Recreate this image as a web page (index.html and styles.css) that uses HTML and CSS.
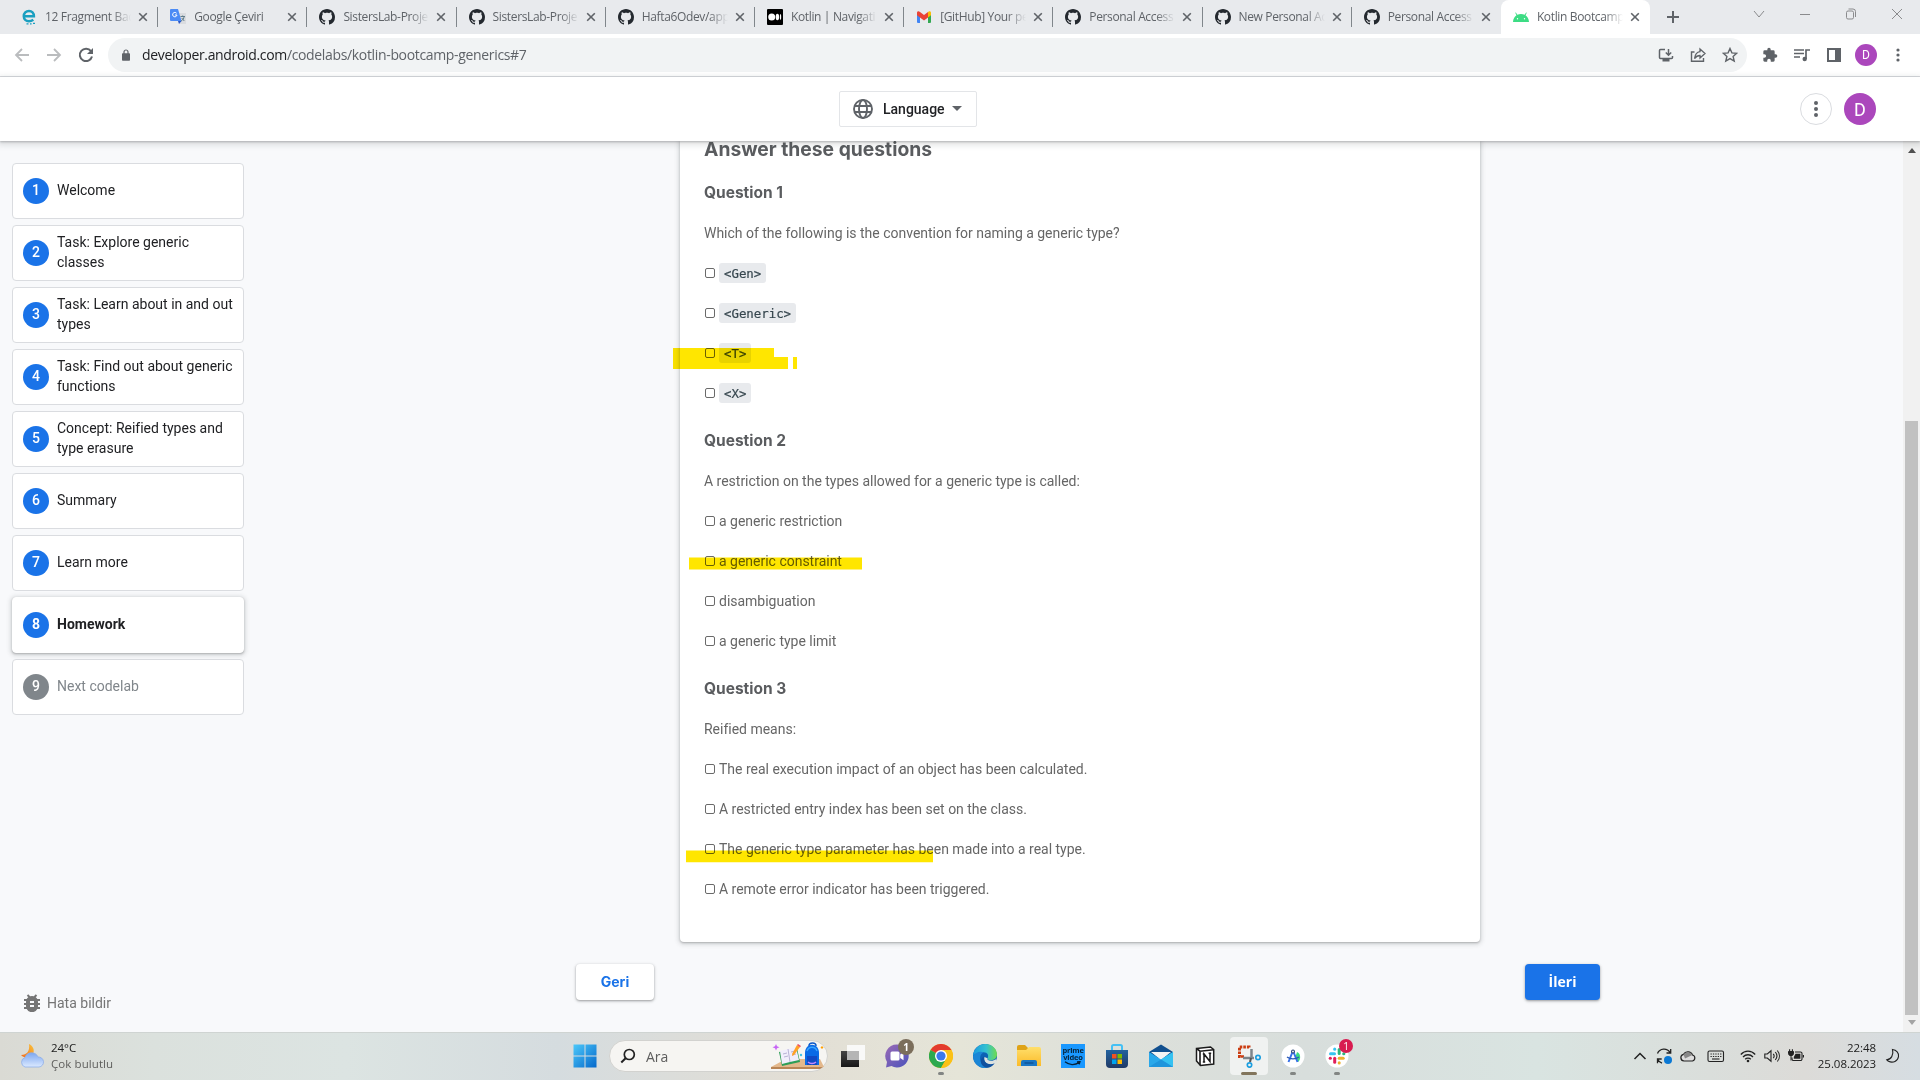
FILE: index.html
```html
<!DOCTYPE html>
<html lang="tr">
<head>
<meta charset="utf-8">
<title>Kotlin Bootcamp</title>
<link rel="stylesheet" href="styles.css">
</head>
<body>
<svg class="defs" aria-hidden="true">
  <symbol id="github" viewBox="0 0 16 16"><path fill="#24292f" d="M8 0C3.58 0 0 3.58 0 8c0 3.54 2.29 6.53 5.47 7.59.4.07.55-.17.55-.38 0-.19-.01-.82-.01-1.49-2.01.37-2.53-.49-2.69-.94-.09-.23-.48-.94-.82-1.13-.28-.15-.68-.52-.01-.53.63-.01 1.08.58 1.23.82.72 1.21 1.87.87 2.33.66.07-.52.28-.87.51-1.07-1.78-.2-3.64-.89-3.64-3.95 0-.87.31-1.59.82-2.15-.08-.2-.36-1.02.08-2.12 0 0 .67-.21 2.2.82.64-.18 1.32-.27 2-.27.68 0 1.36.09 2 .27 1.53-1.04 2.2-.82 2.2-.82.44 1.1.16 1.92.08 2.12.51.56.82 1.27.82 2.15 0 3.07-1.87 3.75-3.65 3.95.29.25.54.73.54 1.48 0 1.07-.01 1.93-.01 2.2 0 .21.15.46.55.38A8.013 8.013 0 0016 8c0-4.42-3.58-8-8-8z"/></symbol>
  <symbol id="close" viewBox="0 0 16 16"><path d="M4.2 4.2l7.6 7.6M11.8 4.2l-7.6 7.6" stroke="#5f6368" stroke-width="1.6" fill="none"/></symbol>
</svg>

<header class="tabs">
  <div class="tab"><svg class="fav" viewBox="0 0 16 16"><path d="M4 7.300H12.900C12.900 4 10.800 2 8 2 5 2 2.800 4.200 2.800 7.300c0 3.100 2.200 4.900 5 4.900 1.700 0 3.200-.5 4.500-1.500" fill="none" stroke="#1a9fc0" stroke-width="2.500"/><path d="M5.500 14.800h2M9 14.800h1.600M12 14.300h2" stroke="#1a9fc0" stroke-width="1.300"/></svg><span class="tab-title">12 Fragment Bac</span><svg class="x"><use href="#close"/></svg></div>
  <div class="tab"><svg class="fav" viewBox="0 0 16 16"><path d="M7 4h9v11H9z" fill="#dadce0"/><path d="M1 0h7l3.500 12H1a1 1 0 0 1-1-1V1a1 1 0 0 1 1-1z" fill="#4c8bf5"/><path d="M8 12h3.500L9 15z" fill="#2a56c6"/><path d="M6.600 4.300A2.200 2.200 0 1 0 7 6H5" stroke="#fff" fill="none"/><path d="M10.500 7.500h4.500M12.700 6.500v1M11 12c2-1 3-2.500 3-4.300M11.700 9l2.600 3" stroke="#607d8b" fill="none"/></svg><span class="tab-title">Google Çeviri</span><svg class="x"><use href="#close"/></svg></div>
  <div class="tab"><svg class="fav"><use href="#github"/></svg><span class="tab-title">SistersLab-Proje</span><svg class="x"><use href="#close"/></svg></div>
  <div class="tab"><svg class="fav"><use href="#github"/></svg><span class="tab-title">SistersLab-Proje</span><svg class="x"><use href="#close"/></svg></div>
  <div class="tab"><svg class="fav"><use href="#github"/></svg><span class="tab-title">Hafta6Odev/app</span><svg class="x"><use href="#close"/></svg></div>
  <div class="tab"><svg class="fav" viewBox="0 0 16 16"><rect width="16" height="16" rx="1"/><g fill="#fff"><circle cx="4.700" cy="8" r="3.500"/><ellipse cx="10.400" cy="8" rx="1.700" ry="3.300"/><ellipse cx="13.500" cy="8" rx=".7" ry="3"/></g></svg><span class="tab-title">Kotlin | Navigati</span><svg class="x"><use href="#close"/></svg></div>
  <div class="tab"><svg class="fav" viewBox="0 0 16 16"><path d="M1 3.500v9.500a1 1 0 0 0 1 1h2V6z" fill="#4285f4"/><path d="M15 3.500v9.500a1 1 0 0 1-1 1h-2V6z" fill="#34a853"/><path d="M12 4v4.500l3-2.300V4c0-1.800-1.600-2.300-3-1z" fill="#fbbc04"/><path d="M1 4v2.200l7 5.300 4-3V3L8 6 4 3C2.600 1.700 1 2.200 1 4z" fill="#ea4335"/></svg><span class="tab-title">[GitHub] Your pe</span><svg class="x"><use href="#close"/></svg></div>
  <div class="tab"><svg class="fav"><use href="#github"/></svg><span class="tab-title">Personal Access</span><svg class="x"><use href="#close"/></svg></div>
  <div class="tab"><svg class="fav"><use href="#github"/></svg><span class="tab-title">New Personal Ac</span><svg class="x"><use href="#close"/></svg></div>
  <div class="tab last"><svg class="fav"><use href="#github"/></svg><span class="tab-title">Personal Access</span><svg class="x"><use href="#close"/></svg></div>
  <div class="tab active"><svg class="fav" viewBox="0 0 16 16"><path d="M0 13c.2-3.300 1.500-5.500 3.500-6.800L2.200 3.800l.7-.4 1.400 2.400c2.300-1 5-1 7.400 0L13.100 3.400l.7.4-1.300 2.400c2 1.300 3.300 3.500 3.500 6.800z" fill="#3ddc84"/><circle cx="4.500" cy="9.800" r=".7" fill="#fff"/><circle cx="11.500" cy="9.800" r=".7" fill="#fff"/></svg><span class="tab-title">Kotlin Bootcamp</span><svg class="x"><use href="#close"/></svg></div>
  <svg class="new-tab" viewBox="0 0 16 16"><path d="M8 2v12M2 8h12" stroke="#5f6368" stroke-width="2"/></svg>
  <div class="window-buttons">
    <svg viewBox="0 0 16 16"><path d="M3 5l5 6 5-6"/></svg>
    <svg viewBox="0 0 16 16"><path d="M3 8.500h10"/></svg>
    <svg viewBox="0 0 16 16"><rect x="3.500" y="5" width="7" height="8" rx="1.500"/><path d="M5.500 3h4.500a2.500 2.500 0 0 1 2.500 2.500V11"/></svg>
    <svg viewBox="0 0 16 16"><path d="M3 3l10 10M13 3L3 13"/></svg>
  </div>
</header>

<div class="toolbar">
  <div class="nav-icons">
    <svg viewBox="0 0 16 16"><path d="M15 8H2M8 2L2 8l6 6" stroke="#babcbe" stroke-width="1.800" fill="none"/></svg>
    <svg viewBox="0 0 16 16"><path d="M1 8h13M8 2l6 6-6 6" stroke="#babcbe" stroke-width="1.800" fill="none"/></svg>
    <svg viewBox="0 0 16 16"><path d="M13 4.200A6.200 6.200 0 1 0 14 9.500" stroke="#5f6368" stroke-width="2" fill="none"/><path d="M15 1v6H9z" fill="#5f6368"/></svg>
  </div>
  <div class="omnibox">
    <svg class="lock" viewBox="0 0 8 12"><rect y="4.300" width="8" height="7.500" rx=".8" fill="#5f6368"/><path d="M2 5V3a2 2 0 0 1 4 0v2" fill="none" stroke="#5f6368" stroke-width="1.200"/></svg>
    <span class="url"><b>developer.android.com</b>/codelabs/kotlin-bootcamp-generics#7</span>
    <svg viewBox="0 0 16 16"><path d="M7 2.500H2.500a1 1 0 0 0-1 1v7a1 1 0 0 0 1 1h11a1 1 0 0 0 1-1V9M10.500 2v6M7.800 5.500l2.700 2.700 2.700-2.700" fill="none" stroke="#5f6368" stroke-width="1.500"/><path d="M4.500 12h7v2.500h-7z" fill="#5f6368"/></svg>
    <svg viewBox="0 0 16 16"><path d="M4.500 5H1.500v9.300h12V11" fill="none" stroke="#5f6368" stroke-width="1.400"/><path d="M10 2l5 4.500-5 4.500V8.500C7.500 8.500 6 9.500 4.500 11.500 5 8 7 5 10 4.600z" fill="none" stroke="#5f6368" stroke-width="1.300"/></svg>
    <svg viewBox="0 0 16 16"><path d="M8 1.500l1.900 4.400 4.800.4-3.600 3.100 1.100 4.700L8 11.600l-4.200 2.500 1.100-4.700L1.300 6.300l4.800-.4z" fill="none" stroke="#5f6368" stroke-width="1.400"/></svg>
  </div>
  <div class="tool-icons">
    <svg viewBox="0 0 24 24"><path fill="#5f6368" d="M20.500 11H19V7a2 2 0 0 0-2-2h-4V3.500a2.500 2.500 0 0 0-5 0V5H4a2 2 0 0 0-2 2v3.800h1.500a2.700 2.700 0 0 1 0 5.400H2V20c0 1.100.9 2 2 2h3.800v-1.500a2.700 2.700 0 0 1 5.400 0V22H17a2 2 0 0 0 2-2v-4h1.500a2.500 2.500 0 0 0 0-5z"/></svg>
    <svg viewBox="0 0 16 16"><path d="M0 3h10M0 6.500h10M0 10h6M12 12V3h4" fill="none" stroke="#5f6368" stroke-width="1.700"/><circle cx="10.700" cy="12" r="2.200" fill="#5f6368"/></svg>
    <svg viewBox="0 0 16 16"><path fill="#5f6368" fill-rule="evenodd" d="M1 1h14v14H1zM3 3v10h6V3z"/></svg>
    <span class="avatar small">D</span>
    <svg class="menu" viewBox="0 0 16 16"><g fill="#5f6368"><circle cx="8" cy="3" r="1.600"/><circle cx="8" cy="8" r="1.600"/><circle cx="8" cy="13" r="1.600"/></g></svg>
  </div>
</div>

<div class="site-header">
  <button class="language"><svg class="globe" viewBox="0 0 20 20"><g fill="none" stroke="#5f6368" stroke-width="1.900"><circle cx="10" cy="10" r="9"/><ellipse cx="10" cy="10" rx="4" ry="9"/><path d="M1.500 7h17M1.500 13h17"/></g></svg><span>Language</span><svg class="caret" viewBox="0 0 10 5"><path d="M0 0h10L5 5z" fill="#5f6368"/></svg></button>
  <div class="account">
    <span class="more"><svg viewBox="0 0 16 16"><g fill="#5f6368"><circle cx="8" cy="2" r="2"/><circle cx="8" cy="8" r="2"/><circle cx="8" cy="14" r="2"/></g></svg></span>
    <span class="avatar">D</span>
  </div>
</div>

<main class="page">
  <nav class="sidebar">
    <ol class="steps">
      <li><i>1</i><span>Welcome</span></li>
      <li><i>2</i><span>Task: Explore generic classes</span></li>
      <li><i>3</i><span>Task: Learn about in and out types</span></li>
      <li><i>4</i><span>Task: Find out about generic functions</span></li>
      <li><i>5</i><span>Concept: Reified types and type erasure</span></li>
      <li><i>6</i><span>Summary</span></li>
      <li><i>7</i><span>Learn more</span></li>
      <li class="current"><i>8</i><span>Homework</span></li>
      <li class="next"><i>9</i><span>Next codelab</span></li>
    </ol>
    <div class="report"><svg viewBox="0 0 18 18"><path fill="#757575" d="M17 5h-2.700a6 6 0 0 0-1.600-1.800L14.200 1.700 12.800.3l-2 2a6 6 0 0 0-3.600 0l-2-2-1.400 1.400 1.500 1.500A6 6 0 0 0 3.700 5H1v2h2.100L3 8v1H1v2h2v1l.1 1H1v2h2.700a6 6 0 0 0 10.600 0H17v-2h-2.100l.1-1v-1h2V9h-2V8l-.1-1H17zM11 13H7v-2h4zm0-4H7V7h4z"/></svg><span>Hata bildir</span></div>
  </nav>

  <div class="column">
    <article class="card">
      <h2>Answer these questions</h2>
      <h3>Question 1</h3>
      <p>Which of the following is the convention for naming a generic type?</p>
      <p class="option"><span class="box"></span><code>&lt;Gen&gt;</code></p>
      <p class="option"><span class="box"></span><code>&lt;Generic&gt;</code></p>
      <p class="option"><span class="box"></span><code>&lt;T&gt;</code></p>
      <p class="option"><span class="box"></span><code>&lt;X&gt;</code></p>
      <h3>Question 2</h3>
      <p>A restriction on the types allowed for a generic type is called:</p>
      <p class="option"><span class="box"></span>a generic restriction</p>
      <p class="option"><span class="box"></span>a generic constraint</p>
      <p class="option"><span class="box"></span>disambiguation</p>
      <p class="option"><span class="box"></span>a generic type limit</p>
      <h3>Question 3</h3>
      <p>Reified means:</p>
      <p class="option"><span class="box"></span>The real execution impact of an object has been calculated.</p>
      <p class="option"><span class="box"></span>A restricted entry index has been set on the class.</p>
      <p class="option"><span class="box"></span>The generic type parameter has been made into a real type.</p>
      <p class="option"><span class="box"></span>A remote error indicator has been triggered.</p>
    </article>
    <div class="pager"><button class="back">Geri</button><button class="forward">İleri</button></div>
  </div>

  <div class="scrollbar">
    <svg viewBox="0 0 10 6"><path d="M1 6l4-5 4 5z" fill="#505050"/></svg>
    <div class="thumb"></div>
    <svg viewBox="0 0 10 6"><path d="M1 0l4 5 4-5z" fill="#a3a3a3"/></svg>
  </div>

  <svg class="marker" viewBox="0 141 1903 891"><g fill="#ffe600"><path d="M673 348h101v9h14v12H673z"/><path d="M793 357h4v12h-4z"/><path d="M689 557.500h173v12H689z"/><path d="M686 850.500h247v11.700H686z"/></g></svg>
</main>

<footer class="taskbar">
  <div class="weather">
    <svg viewBox="0 0 24 24"><defs><linearGradient id="cl" x1="0" y1="0" x2="0" y2="1"><stop offset="0" stop-color="#7da7f0"/><stop offset="1" stop-color="#dbe9ff"/></linearGradient><linearGradient id="mo" x1="0" y1="1" x2="1" y2="0"><stop offset="0" stop-color="#f26b1d"/><stop offset="1" stop-color="#f9c33b"/></linearGradient></defs><path d="M9 0c4 2 6 6 4 10-2 4-8 5-12 1 6 0 9-4 8-11z" fill="url(#mo)"/><path d="M5 23a5 5 0 0 1 0-9.500 7 7 0 0 1 13-.5 5 5 0 0 1 1 10z" fill="url(#cl)" stroke="#8eaee8" stroke-width=".8"/></svg>
    <div><span>24°C</span><span class="dim">Çok bulutlu</span></div>
  </div>

  <div class="apps">
    <svg class="app win" viewBox="0 0 24 24"><defs><linearGradient id="wn" x1="0" y1="0" x2="1" y2="1"><stop offset="0" stop-color="#4cc8fa"/><stop offset="1" stop-color="#0568cb"/></linearGradient></defs><path d="M.5.500h11v11H.5zM12.500.500h11v11h-11zM.5 12.500h11v11H.5zM12.500 12.500h11v11h-11z" fill="url(#wn)"/></svg>
    <div class="search">
      <svg class="lens" viewBox="0 0 16 16"><circle cx="9.300" cy="6.500" r="5" fill="none" stroke="#222" stroke-width="1.700"/><path d="M5.600 10.200L1.300 14.500" stroke="#222" stroke-width="2"/></svg>
      <span>Ara</span>
      <svg class="school" viewBox="0 0 53 28"><path d="M0 25L15 17h34l4 8z" fill="#e3b88c"/><path d="M0 25h52l-3 2H0z" fill="#b98555"/><path d="M8 10l18-4 3 14-18 4z" fill="#2e9e57"/><path d="M9 9l8-2 8-2 3 13-9 2-8 2z" fill="#f1eefc"/><path d="M17 7l2 13M12 12l4-1M13 15l4-1M20 10l4-1M21 13l4-1" stroke="#a9a2cc" stroke-width=".8"/><path d="M26 3l3 2-6 8-2 1 .3-2.500z" fill="#ffa126"/><path d="M26 3l1-1 3 2-1 1.200z" fill="#ef4b5f"/><path d="M38 4c0-4 7-4 7 0" stroke="#0a58c8" stroke-width="1.500" fill="none"/><path d="M34 23V11c0-11 14-11 14 0v12z" fill="#0a6ae6"/><path d="M36 14h10v9H36z" fill="#1149c4"/><path d="M37 20c2 2 6 2 8 0" stroke="#c38bff" stroke-width="1.500" fill="none"/><path d="M36 9c2-5 8-5 10 0" stroke="#38a5ff" fill="none" stroke-width="1.500"/><path d="M5 2l1 2.200L8.500 5.300 6 6.300 5 8.600 4 6.300 1.500 5.300 4 4.200z" fill="#c764f5"/><path d="M51 4l1.500 1.500L51 7l-1.500-1.500z" fill="#ffa000"/><circle cx="30" cy="13" r="1.200" fill="#42c1e8"/></svg>
    </div>
    <svg class="app" viewBox="0 0 24 24"><defs><linearGradient id="tv" x1="0" y1="0" x2="0" y2="1"><stop offset="0" stop-color="#444"/><stop offset="1" stop-color="#161616"/></linearGradient></defs><path d="M0 7h18v16H0z" fill="url(#tv)"/><path d="M6 1h18v15H6z" fill="#fbfbfb" opacity=".92"/><path d="M6 7h12v9H6z" fill="#b5b5b5"/></svg>
    <div class="slot"><svg class="app" viewBox="0 0 24 24"><defs><linearGradient id="ch" x1="0" y1="0" x2="1" y2="1"><stop offset="0" stop-color="#9a6ab5"/><stop offset="1" stop-color="#4b53bc"/></linearGradient></defs><path d="M12 .5A11.500 11.500 0 1 1 6.500 22L1 23.500 2 18A11.500 11.500 0 0 1 12 .5z" fill="url(#ch)"/><rect x="5.500" y="7.500" width="9" height="9" rx="1.500" fill="#fff"/><path d="M15.200 10.500l3.300-2.300v8l-3.300-2.300z" fill="#fff"/></svg><b class="badge brown">1</b></div>
    <div class="slot run"><svg class="app" viewBox="0 0 24 24"><circle cx="12" cy="12" r="12" fill="#fbc116"/><path d="M12 12L1.600 6A12 12 0 0 1 22.400 6H12z" fill="#e33b2e"/><path d="M12 12L1.600 6A12 12 0 0 0 12 24l5.200-9z" fill="#2da94f"/><path d="M22.400 6H12l5.200 9L12 24A12 12 0 0 0 22.400 6z" fill="#fbc116"/><circle cx="12" cy="12" r="6" fill="#fff"/><circle cx="12" cy="12" r="4.600" fill="#3b79ec"/></svg></div>
    <svg class="app" viewBox="0 0 24 24"><defs><linearGradient id="ed" x1="0" y1="0" x2="1" y2="0"><stop offset="0" stop-color="#199ae0"/><stop offset=".55" stop-color="#35c1d0"/><stop offset="1" stop-color="#6fdc4d"/></linearGradient></defs><circle cx="12" cy="12" r="12" fill="#0c62b5"/><path d="M0 11.500C1 4.500 6 0 12.200 0 19 0 24 5 24 10.500c0 3.500-2.600 5.700-6 5.700-2.600 0-4-.9-3.500-2 1.600-2.500.3-6-4-6C5.500 8.200 1.500 10.300 0 11.500z" fill="url(#ed)"/><path d="M0 12c2-3.500 7-5.200 10.500-3.600C6.500 10 6 16 9 20c1 1.500 2.700 3 4.600 3.900A12 12 0 0 1 0 12z" fill="#1b86d6"/><path d="M14.500 14.200c-.7 1.300.8 2.500 3.500 2.500 2 0 3.700-.6 5-1.500l1 3.500-2.500 1.500C16 22 10 18.500 11.500 13z" fill="#dde2df"/><path d="M11 12.500c-1.500 5.500 4 9.500 10.700 6.800C18 24.500 11 25 8.500 20 7 16.500 8.500 13.500 11 12.500z" fill="#10509e"/></svg>
    <svg class="app" viewBox="0 0 24 24"><defs><linearGradient id="fo" x1="0" y1="0" x2="0" y2="1"><stop offset="0" stop-color="#ffdf6b"/><stop offset="1" stop-color="#fbbb2a"/></linearGradient></defs><path d="M0 3a2 2 0 0 1 2-2h6l3 3v4H0z" fill="#dfa317"/><path d="M0 6h9l3-3h10a2 2 0 0 1 2 2v17H0z" fill="url(#fo)"/><path d="M4 22v-4a2 2 0 0 1 2-2h12a2 2 0 0 1 2 2v4z" fill="#1a76c4"/><path d="M7.500 19h9" stroke="#0d4f91" stroke-width="1.300"/></svg>
    <div class="app prime"><span>prime<br>video</span><svg viewBox="0 0 18 5"><path d="M1 .8c4 3.500 10 3.500 14 .8M13 .8l3-.2-.8 2.800" fill="none" stroke="#06243c" stroke-width="1.300"/></svg></div>
    <svg class="app" viewBox="0 0 24 24"><defs><linearGradient id="st" x1="0" y1="0" x2="0" y2="1"><stop offset="0" stop-color="#22629f"/><stop offset="1" stop-color="#203a66"/></linearGradient></defs><path d="M7 8V2.500A1.500 1.500 0 0 1 8.500 1h7A1.500 1.500 0 0 1 17 2.500V8" fill="none" stroke="#45c0f4" stroke-width="2"/><path d="M1 6h22v14a4 4 0 0 1-4 4H5a4 4 0 0 1-4-4z" fill="url(#st)"/><path d="M7 10h4.500v4.500H7z" fill="#f25022"/><path d="M12.500 10H17v4.500h-4.500z" fill="#7fba00"/><path d="M7 15.500h4.500V20H7z" fill="#00a4ef"/><path d="M12.500 15.500H17V20h-4.500z" fill="#ffb900"/></svg>
    <svg class="app" viewBox="0 0 24 24"><path d="M0 8l12-7.500L24 8v6H0z" fill="#114f8e"/><path d="M2 8h20l-10 8z" fill="#f4f4f4"/><path d="M0 8l12 7.500L24 8v15H0z" fill="#2aa8ea"/><path d="M24 8v15L12 15.500z" fill="#35c1f1"/><path d="M0 23l12-7.500L24 23z" fill="#1f95dc"/></svg>
    <svg class="app" viewBox="0 0 24 24"><path d="M3.500 4.500l14-1.500 3.200 2.500V20L7.500 21.500 3.500 17z" fill="#fff" stroke="#1b1b1b" stroke-width="1.500"/><path d="M3.500 4.500L7 7.200l13.700-1.500M7 7.200v14" fill="none" stroke="#1b1b1b" stroke-width="1.600"/><path d="M11 18v-8l6 7.500V9.200M9.800 10h2M9.800 18h2.400M15.600 9.200h2.600" fill="none" stroke="#1b1b1b" stroke-width="1.500"/></svg>
    <div class="slot focus"><svg class="app" viewBox="0 0 24 24"><path d="M12 3.500V3H2.500v9.500H4" fill="none" stroke="#cb3d12" stroke-width="3" stroke-dasharray="2.600 1"/><path d="M4 12.500h3" stroke="#cb3d12" stroke-width="2.500"/><path d="M14.500 5v10M6 14h11" stroke="#7d858b" stroke-width="2.500" fill="none"/><path d="M14 14l-1 4" stroke="#555" stroke-width="2"/><g fill="none" stroke="#1d9fe0" stroke-width="1.700"><circle cx="21" cy="13.500" r="2.200"/><circle cx="12.500" cy="21" r="2.200"/></g></svg></div>
    <div class="slot run"><svg class="app" viewBox="0 0 24 24"><circle cx="12" cy="12" r="11.500" fill="#fff"/><path d="M16 8c4 1 4 8 1 10l-3-4z" fill="#3ddc84"/><path d="M11.500 8L7.500 18M12.500 8l4 10" stroke="#3871e8" stroke-width="2"/><path d="M6 13c3 2.500 9 2.500 12 0" stroke="#2b59b5" stroke-width="1.200" fill="none"/><circle cx="12" cy="7.500" r="1.900" fill="#1e3a6e"/><circle cx="12" cy="7.500" r=".9" fill="#fff"/></svg></div>
    <div class="slot run"><svg class="app" viewBox="0 0 24 24"><circle cx="12" cy="12" r="11.500" fill="#fff"/><g stroke-width="3" stroke-linecap="round"><path d="M5.500 9.700h4" stroke="#36c5f0"/><path d="M9.700 5v.3" stroke="#36c5f0"/><path d="M14.200 5.500v4" stroke="#2eb67d"/><path d="M18.700 9.700h.2" stroke="#2eb67d"/><path d="M14.200 14.200h4" stroke="#ecb22e"/><path d="M14.200 18.700v.2" stroke="#ecb22e"/><path d="M9.700 14.200v4" stroke="#e01e5a"/><path d="M5.200 14.200h.2" stroke="#e01e5a"/></g></svg><b class="badge red">1</b></div>
  </div>

  <div class="tray">
    <svg viewBox="0 0 16 16"><path d="M2.500 11L8 5.500l5.500 5.500" stroke-width="1.500"/></svg>
    <svg viewBox="0 0 16 16"><path d="M1.500 5.500a7 7 0 0 1 12.500-1M14.700 1v4h-4.200M6 15.200A7 7 0 0 1 1.800 11.500M1.500 15.200V11h4.200" stroke-width="1.300"/><circle cx="12" cy="12" r="4" fill="#0a78d4" stroke="none"/></svg>
    <svg viewBox="0 0 16 16"><path d="M4 13a3.400 3.400 0 0 1-.5-6.700A5 5 0 0 1 12.500 7a3.100 3.100 0 0 1 0 6z" fill="#ddd" stroke-width="1.200"/><path d="M3.500 6.600A5 5 0 0 1 12.400 7L5 10.500z" fill="#888" stroke="none"/></svg>
    <svg class="kbd" viewBox="0 0 18 16"><rect x="1" y="3" width="15.500" height="10.500" rx="1.500"/><path d="M3.500 6h11M3.500 8.500h11" stroke-dasharray="1.300 1.100"/><path d="M5 11h7.500"/></svg>
    <svg class="wifi" viewBox="0 0 16 16"><path d="M.8 6.500c4-4.400 10.400-4.400 14.400 0M3 9c2.800-3 7.200-3 10 0M5.200 11.300c1.500-1.600 4-1.600 5.600 0" stroke-width="1.300"/><circle cx="8" cy="13" r="1.300" fill="#222" stroke="none"/></svg>
    <svg viewBox="0 0 16 16"><path d="M.8 6h2.500L7 2.800v10.400L3.300 10H.8zM9.300 5.800c1 1.300 1 3.100 0 4.400M11.300 4c2 2.400 2 5.600 0 8M13.300 2.500c2.800 3.300 2.800 7.700 0 11"/></svg>
    <svg viewBox="0 0 16 16"><path d="M7 4h5.500A1.500 1.500 0 0 1 14 5.500V11a1.500 1.500 0 0 1-1.500 1.500h-7A1.500 1.500 0 0 1 4 11V9.500"/><path d="M7.500 5.700h4.900v5.100H5.800V9z" fill="#222" stroke="none"/><path d="M15.500 7v2.500" stroke-width="1.400"/><path d="M.5 3.500h5v1.700a2.500 2.500 0 0 1-5 0zM3 7v5.500" fill="#222" stroke-width="1"/><path d="M1.600 1.300v2M4.400 1.300v2"/></svg>
    <div class="clock"><span>22:48</span><span>25.08.2023</span></div>
    <svg class="moon" viewBox="0 0 16 16"><path d="M7.500 1.500c4 .5 6.500 3.500 6 7-.6 4.500-5.500 7-10 4.800-1-.5-1.500-1-1.800-1.500C6 11.500 9 7 7.500 1.500z"/></svg>
  </div>
</footer>
</body>
</html>
```
FILE: styles.css
```css
* { box-sizing: border-box; }
body { margin: 0; width: 1920px; height: 1080px; overflow: hidden; display: flex; flex-direction: column; font-family: Roboto, sans-serif; background: #fff; }
svg { display: block; flex: none; }
button { font: inherit; border: 0; padding: 0; }
.defs { display: none; }

/* Browser chrome */
.tabs { height: 34px; flex: none; background: #e8eaed; display: flex; align-items: center; padding-left: 9px; font: 12px "Open Sans", "Noto Sans", sans-serif; letter-spacing: -0.35px; color: #5f6368; }
.tab { position: relative; width: 149.2px; height: 34px; flex: none; display: flex; align-items: center; padding-left: 12px; }
.tab::after { content: ""; position: absolute; right: 0; top: 7px; width: 1px; height: 20px; background: #80868b; }
.tab.last::after, .tab.active::after { display: none; }
.tab.active { background: #fff; border-radius: 8px 8px 0 0; }
.fav { width: 16px; height: 16px; margin-right: 8px; }
.tab-title { width: 86px; line-height: 16px; padding-bottom: 1px; white-space: nowrap; -webkit-mask-image: linear-gradient(90deg, #000 78%, transparent); mask-image: linear-gradient(90deg, #000 78%, transparent); }
.tab:nth-child(2) .tab-title { -webkit-mask-image: none; mask-image: none; }
.x { width: 16px; height: 16px; margin-left: 4px; }
.new-tab { width: 16px; height: 16px; margin-left: 15px; }
.window-buttons { display: flex; gap: 30px; margin-left: 70px; padding-bottom: 6px; }
.window-buttons svg { width: 16px; height: 16px; fill: none; stroke: #8a8b8d; stroke-width: 1; }
.toolbar { height: 43px; flex: none; display: flex; align-items: center; border-bottom: 1px solid #dadce0; }
.nav-icons { display: flex; gap: 16px; padding-left: 14px; width: 108px; }
.nav-icons svg { width: 16px; height: 16px; }
.omnibox { width: 1639px; height: 34px; border-radius: 17px; background: #f1f3f4; display: flex; align-items: center; gap: 16px; padding: 0 9px 0 14px; }
.lock { width: 8px; height: 12px; }
.omnibox svg:not(.lock) { width: 16px; height: 16px; }
.url { flex: 1; margin-left: -4px; padding-bottom: 1px; font: 14px "Open Sans", "Noto Sans", sans-serif; letter-spacing: -0.34px; color: #5f6368; white-space: nowrap; }
.url b { font-weight: 400; color: #202124; }
.tool-icons { display: flex; align-items: center; gap: 16px; padding-left: 15px; }
.tool-icons svg { width: 16px; height: 16px; }
.tool-icons .menu { margin-left: -3px; }
.avatar { width: 32px; height: 32px; border-radius: 50%; background: #ab47bc; color: #fff; display: grid; place-items: center; font-size: 18px; }
.avatar.small { width: 22px; height: 22px; font-size: 12px; margin-left: -3px; }

/* Codelab header */
.site-header { position: relative; z-index: 2; height: 64px; flex: none; background: #fff; box-shadow: 0 1px 2px rgba(60,64,67,.3), 0 2px 6px 2px rgba(60,64,67,.15); display: flex; align-items: center; justify-content: space-between; padding: 0 44px 0 839px; }
.language { width: 138px; height: 36px; border: 1px solid #e3e5e8; border-radius: 2px; background: #fff; display: flex; align-items: center; padding: 0 0 1px 13px; color: #202124; font-size: 14px; font-weight: 500; }
.globe { width: 20px; height: 20px; margin-right: 10px; }
.caret { width: 10px; height: 5px; margin-left: 7px; }
.account { display: flex; gap: 12px; }
.more { width: 32px; height: 32px; border: 1px solid #dadce0; border-radius: 50%; display: grid; place-items: center; }
.more svg { width: 16px; height: 16px; }

/* Content */
.page { position: relative; height: 891px; flex: none; display: flex; background: #f8f9fb; }
.sidebar { width: 576px; padding: 22px 0 0 12px; display: flex; flex-direction: column; justify-content: space-between; }
.steps { list-style: none; margin: 0; padding: 0; display: grid; gap: 6px; width: 232px; }
.steps li { height: 56px; border: 1px solid #dadce0; border-radius: 4px; background: #fff; display: flex; align-items: center; gap: 8px; padding: 0 8px 0 10px; font-size: 14px; line-height: 20px; color: #202124; }
.steps span { padding-bottom: 2px; }
.steps i { width: 26px; height: 26px; flex: none; border-radius: 50%; background: #1a73e8; color: #fff; font-style: normal; font-weight: 500; line-height: 25px; text-align: center; }
.steps .current { border-color: #fff; font-weight: 700; box-shadow: 0 1px 2px rgba(60,64,67,.3), 0 1px 4px 2px rgba(60,64,67,.15); }
.steps .current i { font-weight: 700; }
.steps .next { color: #80868b; }
.steps .next i { background: #80868b; }
.report { display: flex; align-items: center; gap: 6px; padding: 0 0 19px 11px; font-size: 14px; line-height: 20px; color: #757575; }
.report svg { width: 18px; height: 18px; }
.column { width: 1024px; }
.card { width: 800px; height: 801px; margin-left: 104px; padding: 0 24px; background: #fff; border-radius: 0 0 4px 4px; box-shadow: 0 1px 2px rgba(60,64,67,.3), 0 1px 4px 2px rgba(60,64,67,.15); color: #5f6368; font-size: 14px; }
.card h2, .card h3 { margin: 0; font-family: Inter, sans-serif; font-weight: 700; color: #5a5c5f; white-space: nowrap; }
.card h2 { height: 24px; font-size: 19.3px; line-height: 16px; }
.card h3 { height: 48px; padding-top: 8px; font-size: 15.5px; line-height: 39px; }
.card p { margin: 0; height: 40px; line-height: 40px; color: #666; letter-spacing: -0.01px; white-space: nowrap; }
.card .option { display: flex; align-items: center; gap: 4.500px; padding-left: .5px; }
.box { width: 10px; height: 10px; border: 1px solid #6a6a6a; border-radius: 2px; }
code { height: 20px; padding: 0 5px; border-radius: 3px; background: #e8eaed; color: #37474f; font: 500 12.400px/21px "DejaVu Sans Mono", monospace; -webkit-text-stroke: .2px #37474f; }
.pager { display: flex; justify-content: space-between; margin-top: 22px; }
.pager button { height: 36px; padding-bottom: 2px; border-radius: 4px; font: 700 14px "Open Sans", sans-serif; box-shadow: 0 1px 2px rgba(60,64,67,.35), 0 1px 3px 1px rgba(60,64,67,.15); }
.pager .back { width: 78px; background: #fff; color: #1a73e8; font-family: Inter, sans-serif; }
.pager .forward { width: 75px; background: #1a73e8; color: #fff; }
.scrollbar { width: 17px; margin-left: auto; background: #f1f1f1; display: flex; flex-direction: column; align-items: center; justify-content: space-between; padding: 6px 0; }
.scrollbar svg { width: 10px; height: 6px; }
.thumb { width: 13px; height: 594px; margin-top: 262px; background: #c1c1c1; }
.marker { position: absolute; left: 0; top: 0; width: 1903px; height: 891px; z-index: 3; mix-blend-mode: multiply; pointer-events: none; }

/* Taskbar */
.taskbar { height: 48px; flex: none; border-top: 1px solid #cfd4d2; padding-bottom: 1px; display: flex; align-items: center; background: linear-gradient(90deg, #dadad4 0, #dbe1dd 8%, #dce4e2 18%, #d5dcdf 29%, #e2ded5 41%, #e5e5d8 50%, #dde0da 58%, #d8dedc 68%, #d9e4e1 80%, #dadedb 89%, #dcdbd8 94%, #d6dde2 100%); font: 11.500px "Open Sans", "Noto Sans", sans-serif; letter-spacing: -0.050px; color: #202020; }
.weather { width: 573px; display: flex; gap: 7px; padding-left: 20px; align-items: center; line-height: 16px; }
.weather svg { width: 24px; height: 24px; }
.weather span, .clock span { display: block; }
.dim { color: #5f5f5d; letter-spacing: .08px; }
.apps { display: flex; align-items: center; gap: 20px; }
.app { width: 24px; height: 24px; flex: none; }
.search { width: 219px; height: 32px; margin: 0 -7px 0 -8px; border-radius: 16px; background: #f6f5f2; border: 1px solid #d2d2cf; display: flex; align-items: center; padding: 0 3px 0 10px; font-size: 14px; color: #5d5d5d; }
.search span { flex: 1; margin-left: 10px; }
.lens { width: 16px; height: 16px; }
.school { width: 53px; height: 28px; }
.slot { position: relative; width: 24px; height: 24px; }
.slot.run::after, .slot.focus::after { content: ""; position: absolute; left: 9px; top: 28px; width: 6px; height: 3px; border-radius: 2px; background: #828583; }
.slot.focus { width: 38px; height: 38px; margin: 0 -7px; padding: 7px; border-radius: 4px; background: #f0f2f1; }
.slot.focus::after { left: 11px; top: 35px; width: 16px; background: #82755c; }
.badge { position: absolute; left: 13px; top: -5px; width: 16px; height: 16px; border-radius: 50%; color: #fff; text-align: center; font: 700 10px/16px "Open Sans", sans-serif; letter-spacing: 0; }
.brown { background: #7b6e5b; }
.red { background: #d81b50; left: 14px; width: 14px; height: 14px; top: -5px; line-height: 14px; font-weight: 400; }
.prime { background: #1a98ff; color: #06243c; font: 700 7.500px/7px "Open Sans", sans-serif; text-align: center; padding-top: 3px; letter-spacing: -0.200px; }
.prime svg { width: 18px; height: 5px; margin: 0 auto; }
.tray { margin-left: auto; padding-right: 19px; display: flex; align-items: center; gap: 8px; }
.tray svg { width: 16px; height: 16px; fill: none; stroke: #222; stroke-width: 1.100; }
.tray .kbd { width: 18px; margin: 0 2px 0 3px; }
.tray .wifi { margin-left: 5px; }
.clock { width: 64px; text-align: right; line-height: 16px; }
.tray .moon { margin-left: 1px; }
```
